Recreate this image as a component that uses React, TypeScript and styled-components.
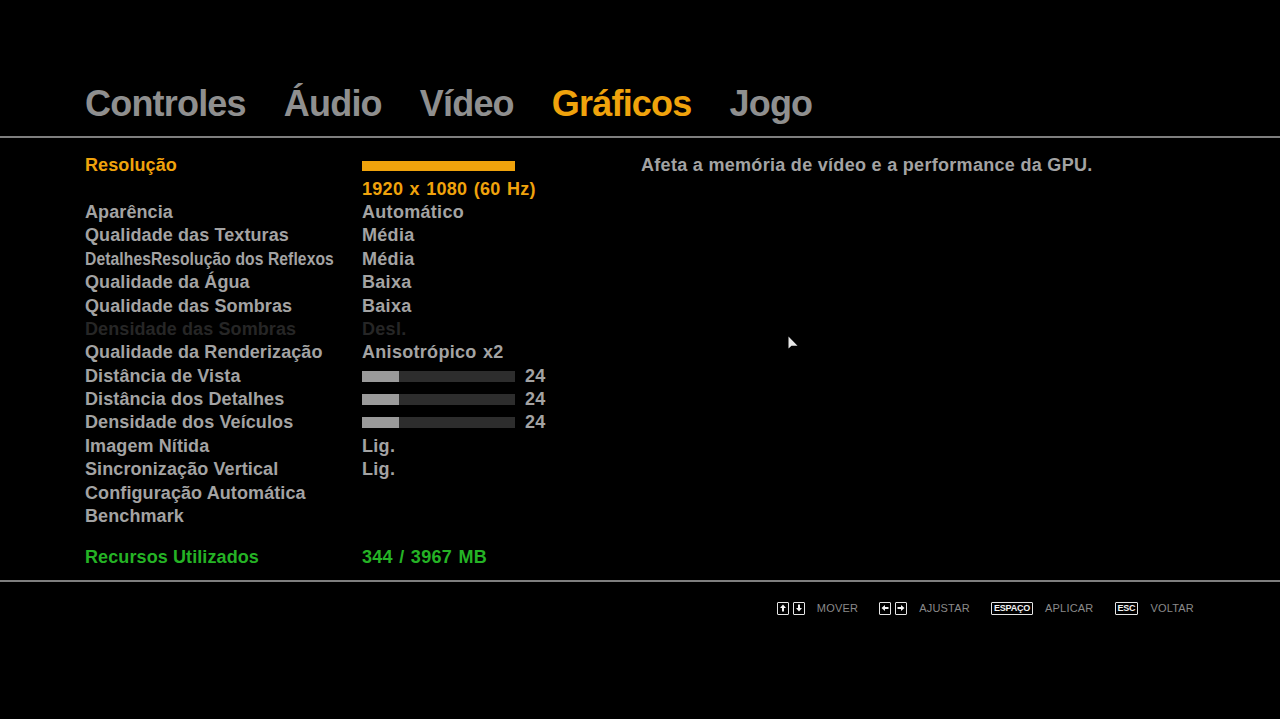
import React from "react";
import styled, { createGlobalStyle } from "styled-components";

const Global = createGlobalStyle`
  html, body { margin: 0; padding: 0; background: #000; }
  body { font-family: "Liberation Sans", Arial, sans-serif; }
`;

const Screen = styled.div`
  position: relative;
  width: 1280px;
  height: 719px;
  background: #000;
  display: flex;
  flex-direction: column;
  overflow: hidden;
`;

const TabBar = styled.nav`
  display: flex;
  gap: 38px;
  padding: 84px 0 12px 85px;
`;

const Tab = styled.div<{ $active?: boolean }>`
  font-size: 36px;
  line-height: 40px;
  font-weight: 700;
  letter-spacing: -0.8px;
  color: ${(p) => (p.$active ? "#f0a30c" : "#8f8f8f")};
`;

const Divider = styled.div`
  height: 2px;
  background: #7e7e7e;
`;

const Content = styled.main`
  display: flex;
  padding: 16px 0 11px 85px;
`;

const Settings = styled.div`
  display: flex;
  flex-direction: column;
  width: 555px;
`;

const Row = styled.div<{ $gapTop?: boolean }>`
  display: grid;
  grid-template-columns: 277px 1fr;
  align-items: center;
  height: 23.4px;
  margin-top: ${(p) => (p.$gapTop ? "17.6px" : "0")};
`;

type Tone = "normal" | "active" | "dim" | "green";
const toneColor: Record<Tone, string> = {
  normal: "#a3a3a3",
  active: "#f0a30c",
  dim: "#262626",
  green: "#25b325",
};

const Label = styled.div<{ $tone: Tone; $squeeze?: number }>`
  font-size: 18px;
  font-weight: 700;
  letter-spacing: 0.1px;
  white-space: nowrap;
  color: ${(p) => toneColor[p.$tone]};
  transform-origin: left center;
  transform: ${(p) => (p.$squeeze ? `scaleX(${p.$squeeze})` : "none")};
`;

const Value = styled(Label)`
  letter-spacing: 0.3px;
  word-spacing: 1px;
`;

const SliderWrap = styled.div`
  display: flex;
  align-items: center;
  gap: 10px;
`;

const Track = styled.div<{ $full?: boolean }>`
  width: 153px;
  height: ${(p) => (p.$full ? "10px" : "11px")};
  background: ${(p) => (p.$full ? "#f0a30c" : "#2d2d2d")};
  display: flex;
`;

const Fill = styled.div`
  height: 100%;
  background: #9a9a9a;
`;

const Description = styled.div`
  margin-left: 1px;
  height: 23.4px;
  display: flex;
  align-items: center;
  font-size: 18px;
  font-weight: 700;
  letter-spacing: 0.3px;
  color: #a3a3a3;
`;

const Footer = styled.footer`
  display: flex;
  justify-content: flex-end;
  align-items: center;
  gap: 21px;
  padding: 18px 86px 0 0;
  height: 16px;
`;

const Hint = styled.div`
  display: flex;
  align-items: center;
  gap: 4px;
`;

const Key = styled.span<{ $wide?: boolean }>`
  display: inline-flex;
  align-items: center;
  justify-content: center;
  box-sizing: border-box;
  height: 13px;
  min-width: 12px;
  padding: ${(p) => (p.$wide ? "0 2px" : "0")};
  border: 1px solid #e6e6e6;
  border-radius: 1px;
  color: #f2f2f2;
  font-size: 9px;
  font-weight: 700;
  letter-spacing: -0.2px;
  line-height: 1;
`;

const HintText = styled.span`
  margin-left: 8px;
  font-size: 11px;
  color: #8a8a8a;
  letter-spacing: 0.2px;
`;

const Cursor = styled.svg`
  position: absolute;
  left: 788px;
  top: 336px;
`;

const Arrow = ({ dir }: { dir: "up" | "down" | "left" | "right" }) => {
  const rot = { up: 0, right: 90, down: 180, left: 270 }[dir];
  return (
    <svg width="8" height="8" viewBox="0 0 8 8">
      <g transform={`rotate(${rot} 4 4)`} fill="#f2f2f2">
        <polygon points="4,0.5 7,4 5,4 5,7.5 3,7.5 3,4 1,4" />
      </g>
    </svg>
  );
};

type Setting = {
  label: string;
  value?: string;
  tone?: Tone;
  slider?: number;
  squeeze?: number;
  bar?: boolean;
};

const settings: Setting[] = [
  { label: "Resolução", tone: "active", bar: true },
  { label: "", value: "1920 x 1080 (60 Hz)", tone: "active" },
  { label: "Aparência", value: "Automático" },
  { label: "Qualidade das Texturas", value: "Média" },
  { label: "DetalhesResolução dos Reflexos", value: "Média", squeeze: 0.87 },
  { label: "Qualidade da Água", value: "Baixa" },
  { label: "Qualidade das Sombras", value: "Baixa" },
  { label: "Densidade das Sombras", value: "Desl.", tone: "dim" },
  { label: "Qualidade da Renderização", value: "Anisotrópico x2" },
  { label: "Distância de Vista", slider: 24 },
  { label: "Distância dos Detalhes", slider: 24 },
  { label: "Densidade dos Veículos", slider: 24 },
  { label: "Imagem Nítida", value: "Lig." },
  { label: "Sincronização Vertical", value: "Lig." },
  { label: "Configuração Automática" },
  { label: "Benchmark" },
];

const tabs = ["Controles", "Áudio", "Vídeo", "Gráficos", "Jogo"];

export default function App() {
  return (
    <Screen>
      <Global />
      <TabBar>
        {tabs.map((t) => (
          <Tab key={t} $active={t === "Gráficos"}>
            {t}
          </Tab>
        ))}
      </TabBar>
      <Divider />
      <Content>
        <Settings>
          {settings.map((s, i) => {
            const tone = s.tone ?? "normal";
            return (
              <Row key={i}>
                <Label $tone={tone} $squeeze={s.squeeze}>
                  {s.label}
                </Label>
                {s.bar ? (
                  <Track $full />
                ) : s.slider !== undefined ? (
                  <SliderWrap>
                    <Track>
                      <Fill style={{ width: `${s.slider}%` }} />
                    </Track>
                    <Value $tone="normal">{s.slider}</Value>
                  </SliderWrap>
                ) : (
                  <Value $tone={tone}>{s.value ?? ""}</Value>
                )}
              </Row>
            );
          })}
          <Row $gapTop>
            <Label $tone="green">Recursos Utilizados</Label>
            <Value $tone="green">344 / 3967 MB</Value>
          </Row>
        </Settings>
        <Description>Afeta a memória de vídeo e a performance da GPU.</Description>
      </Content>
      <Divider />
      <Footer>
        <Hint>
          <Key><Arrow dir="up" /></Key>
          <Key><Arrow dir="down" /></Key>
          <HintText>MOVER</HintText>
        </Hint>
        <Hint>
          <Key><Arrow dir="left" /></Key>
          <Key><Arrow dir="right" /></Key>
          <HintText>AJUSTAR</HintText>
        </Hint>
        <Hint>
          <Key $wide>ESPAÇO</Key>
          <HintText>APLICAR</HintText>
        </Hint>
        <Hint>
          <Key $wide>ESC</Key>
          <HintText>VOLTAR</HintText>
        </Hint>
      </Footer>
      <Cursor width="11" height="16" viewBox="0 0 11 16">
        <polygon points="0.5,0.5 0.5,12.5 3.5,9.8 9.5,9.8" fill="#e8e8e8" />
      </Cursor>
    </Screen>
  );
}
